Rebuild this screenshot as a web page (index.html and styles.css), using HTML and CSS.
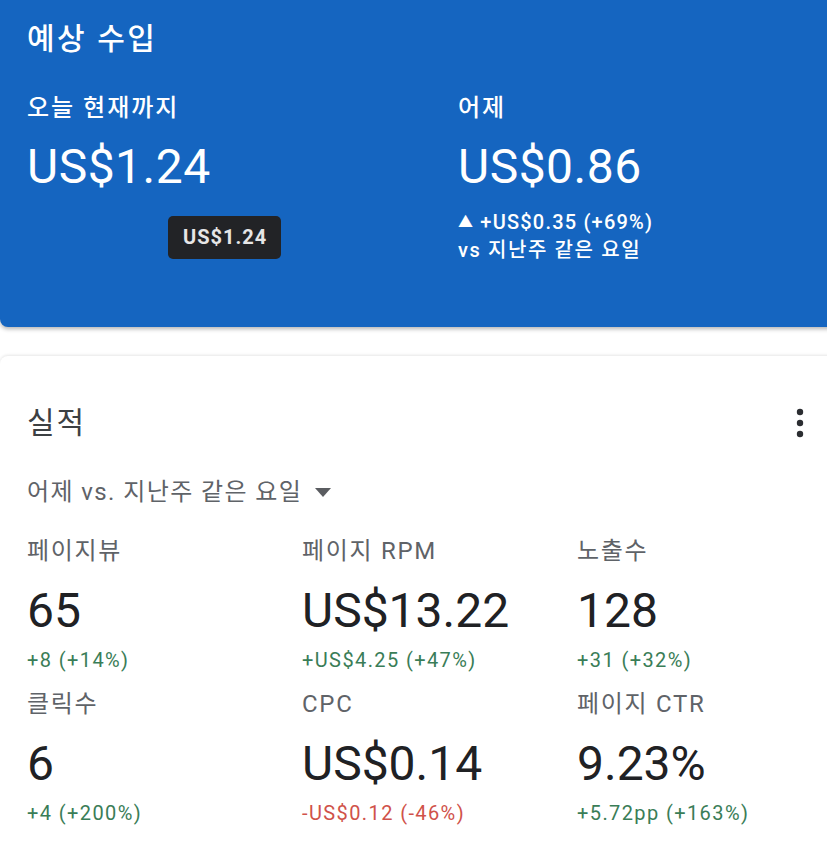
FILE: index.html
```html
<!DOCTYPE html>
<html lang="ko">
<head>
    <meta charset="UTF-8">
    <meta name="viewport" content="width=device-width, initial-scale=1.0">
    <title>예상 수입</title>
    <link rel="stylesheet" href="styles.css">
</head>
<body>
    <section class="earnings">
        <h1 class="earnings-title">예상 수입</h1>
        <div class="earnings-cols">
            <div class="earnings-col">
                <div class="earnings-label">오늘 현재까지</div>
                <div class="earnings-value">US$1.24</div>
                <div class="tooltip">US$1.24</div>
            </div>
            <div class="earnings-col">
                <div class="earnings-label">어제</div>
                <div class="earnings-value">US$0.86</div>
                <div class="earnings-delta"><span class="arrow">▲</span> +US$0.35 (+69%)</div>
                <div class="earnings-delta ko">vs 지난주 같은 요일</div>
            </div>
        </div>
    </section>

    <section class="perf">
        <div class="perf-head">
            <h2 class="perf-title">실적</h2>
            <button class="kebab" aria-label="더보기">
                <svg width="8" height="30" viewBox="0 0 8 30">
                    <circle cx="4" cy="4" r="3.2"/>
                    <circle cx="4" cy="15" r="3.2"/>
                    <circle cx="4" cy="26" r="3.2"/>
                </svg>
            </button>
        </div>
        <div class="compare">
            어제 vs. 지난주 같은 요일
            <span class="caret"></span>
        </div>

        <div class="metrics">
            <div class="metric">
                <div class="metric-label">페이지뷰</div>
                <div class="metric-value">65</div>
                <div class="metric-change up">+8 (+14%)</div>
            </div>
            <div class="metric">
                <div class="metric-label">페이지 RPM</div>
                <div class="metric-value">US$13.22</div>
                <div class="metric-change up">+US$4.25 (+47%)</div>
            </div>
            <div class="metric">
                <div class="metric-label">노출수</div>
                <div class="metric-value">128</div>
                <div class="metric-change up">+31 (+32%)</div>
            </div>
            <div class="metric">
                <div class="metric-label">클릭수</div>
                <div class="metric-value">6</div>
                <div class="metric-change up">+4 (+200%)</div>
            </div>
            <div class="metric">
                <div class="metric-label">CPC</div>
                <div class="metric-value">US$0.14</div>
                <div class="metric-change down">-US$0.12 (-46%)</div>
            </div>
            <div class="metric">
                <div class="metric-label">페이지 CTR</div>
                <div class="metric-value">9.23%</div>
                <div class="metric-change up">+5.72pp (+163%)</div>
            </div>
        </div>
    </section>
</body>
</html>
```

FILE: styles.css
```css
:root {
    --blue: #1565c0;
    --text: #202124;
    --muted: #5f6368;
    --green: #3a7d57;
    --red: #d0524a;
}
body {
    margin: 0;
    overflow: hidden;
    background: #fff;
    font-family: Roboto, "Noto Sans CJK KR", sans-serif;
    color: var(--text);
}
h1, h2 {
    margin: 0;
    font-weight: 400;
}

/* estimated earnings */
.earnings {
    background: var(--blue);
    color: #fff;
    height: 327px;
    box-sizing: border-box;
    padding: 20px 0 0 27px;
    margin-right: -20px;
    border-radius: 0 0 0 8px;
    box-shadow: 0 2px 4px rgba(0,0,0,0.3);
}
.earnings-title {
    font-size: 30px;
    line-height: 38px;
    font-weight: 500;
    letter-spacing: 2.5px;
}
.earnings-cols {
    display: grid;
    grid-template-columns: 431px 1fr;
    margin-top: 35px;
}
.earnings-label {
    font-size: 24px;
    line-height: 30px;
    font-weight: 500;
    letter-spacing: 2px;
}
.earnings-value {
    font-size: 48px;
    line-height: 56px;
    margin-top: 16px;
    letter-spacing: 0.5px;
}
.earnings-delta {
    font-size: 20px;
    line-height: 28px;
    font-weight: 500;
    letter-spacing: 1.2px;
}
.earnings-delta.ko {
    letter-spacing: 1.6px;
}
.earnings-value + .earnings-delta {
    margin-top: 13px;
}
.arrow {
    font-size: 15px;
    vertical-align: 2px;
}
.tooltip {
    display: inline-block;
    margin: 21px 0 0 141px;
    padding: 0 14px 0 15px;
    height: 43px;
    line-height: 43px;
    background: #222326;
    color: #e6e6e6;
    border-radius: 5px;
    font-size: 20px;
    font-weight: 700;
    letter-spacing: 1px;
}

/* performance card */
.perf {
    margin-top: 29px;
    margin-right: -20px;
    padding: 47px 0 16px 27px;
    border-radius: 8px 0 0 0;
    box-shadow: 0 -1px 3px rgba(0,0,0,0.1);
}
.perf-head {
    display: flex;
    align-items: center;
    justify-content: space-between;
    padding-right: 43px;
}
.perf-title {
    font-size: 30px;
    line-height: 40px;
    color: #3c4043;
    letter-spacing: 2px;
}
.kebab {
    border: none;
    background: none;
    padding: 0;
    display: flex;
    fill: #2b2d31;
}
.compare {
    display: flex;
    align-items: center;
    margin-top: 34px;
    font-size: 24px;
    line-height: 30px;
    color: var(--muted);
    letter-spacing: 1.4px;
}
.caret {
    width: 0;
    height: 0;
    margin-left: 13px;
    border-left: 8px solid transparent;
    border-right: 8px solid transparent;
    border-top: 9px solid #5a5c60;
}
.metrics {
    display: grid;
    grid-template-columns: 275px 275px 1fr;
    row-gap: 15px;
    margin-top: 29px;
}
.metric-label {
    font-size: 24px;
    line-height: 30px;
    color: var(--muted);
    letter-spacing: 1.7px;
}
.metric-value {
    font-size: 48px;
    line-height: 56px;
    margin-top: 17px;
    color: var(--text);
}
.metric-change {
    font-size: 20px;
    line-height: 28px;
    margin-top: 7px;
    letter-spacing: 1.4px;
}
.up {
    color: var(--green);
}
.down {
    color: var(--red);
}
```
